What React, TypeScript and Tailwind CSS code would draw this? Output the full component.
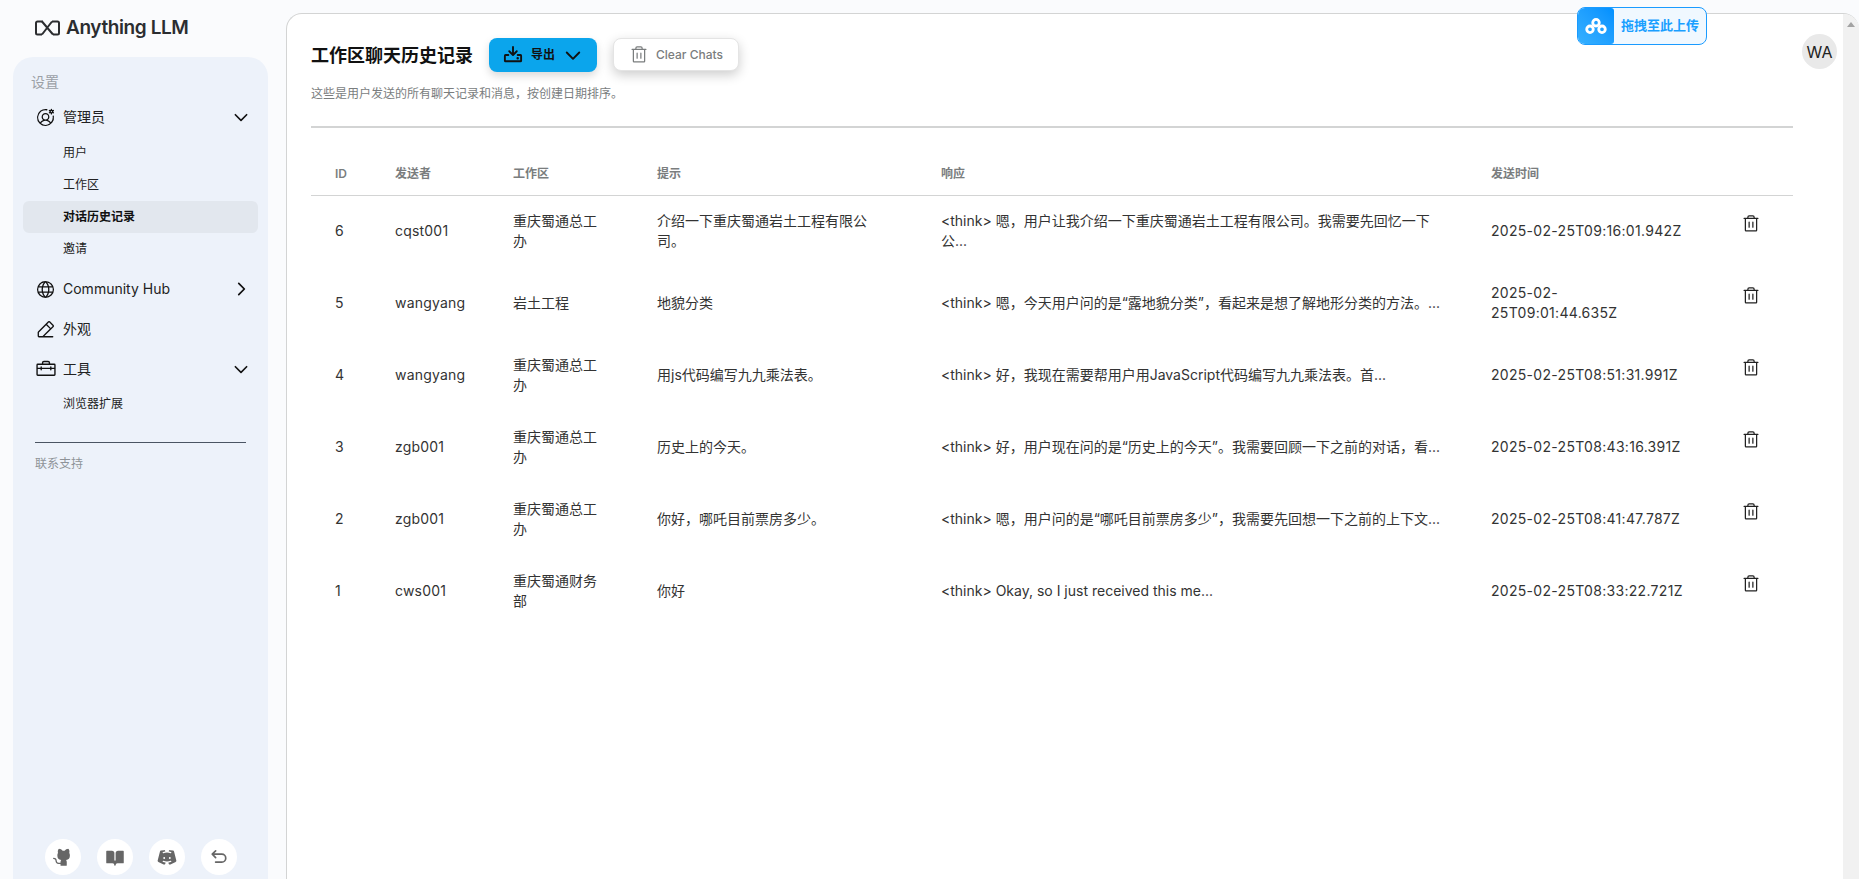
import {
  PiArrowUUpLeftBold,
  PiBookOpenFill,
  PiCaretDownBold,
  PiCaretRightBold,
  PiDiscordLogoFill,
  PiDownloadBold,
  PiGithubLogoFill,
  PiGlobe,
  PiPencilSimpleLine,
  PiToolbox,
  PiTrash,
  PiUserCircleGear,
} from "react-icons/pi";

const font = "font-['Inter','Noto_Sans_CJK_SC',sans-serif]";

const chats = [
  {
    id: 6,
    sender: "cqst001",
    workspace: "重庆蜀通总工办",
    prompt: "介绍一下重庆蜀通岩土工程有限公司。",
    response: "<think> 嗯，用户让我介绍一下重庆蜀通岩土工程有限公司。我需要先回忆一下公...",
    sent: ["2025-02-25T09:16:01.942Z"],
  },
  {
    id: 5,
    sender: "wangyang",
    workspace: "岩土工程",
    prompt: "地貌分类",
    response: "<think> 嗯，今天用户问的是“露地貌分类”，看起来是想了解地形分类的方法。...",
    sent: ["2025-02-", "25T09:01:44.635Z"],
  },
  {
    id: 4,
    sender: "wangyang",
    workspace: "重庆蜀通总工办",
    prompt: "用js代码编写九九乘法表。",
    response: "<think> 好，我现在需要帮用户用JavaScript代码编写九九乘法表。首...",
    sent: ["2025-02-25T08:51:31.991Z"],
  },
  {
    id: 3,
    sender: "zgb001",
    workspace: "重庆蜀通总工办",
    prompt: "历史上的今天。",
    response: "<think> 好，用户现在问的是“历史上的今天”。我需要回顾一下之前的对话，看...",
    sent: ["2025-02-25T08:43:16.391Z"],
  },
  {
    id: 2,
    sender: "zgb001",
    workspace: "重庆蜀通总工办",
    prompt: "你好，哪吒目前票房多少。",
    response: "<think> 嗯，用户问的是“哪吒目前票房多少”，我需要先回想一下之前的上下文...",
    sent: ["2025-02-25T08:41:47.787Z"],
  },
  {
    id: 1,
    sender: "cws001",
    workspace: "重庆蜀通财务部",
    prompt: "你好",
    response: "<think> Okay, so I just received this me...",
    sent: ["2025-02-25T08:33:22.721Z"],
  },
];

function SubItem({ label, active }: { label: string; active?: boolean }) {
  return (
    <div
      className={`flex h-8 items-center rounded-md pl-10 text-xs ${
        active ? "bg-[#e2e7ee] font-semibold text-[#111]" : "font-normal text-[#222]"
      }`}
    >
      {label}
    </div>
  );
}

function MenuItem({
  icon,
  label,
  caret,
}: {
  icon: React.ReactNode;
  label: string;
  caret?: "down" | "right";
}) {
  return (
    <div className="flex h-8 items-center pr-[8px] pl-[12px] text-sm font-normal text-[#222]">
      <span className="flex w-[28px] shrink-0 text-[#111]">{icon}</span>
      <span className="flex-1">{label}</span>
      {caret === "down" && <PiCaretDownBold size={18} className="text-[#111]" />}
      {caret === "right" && <PiCaretRightBold size={18} className="text-[#111]" />}
    </div>
  );
}

function Sidebar() {
  return (
    <aside className="ml-[13px] flex w-[255px] shrink-0 flex-col">
      <div className="flex h-[57px] items-center gap-[6px] pb-[2px] pl-[22px] text-[#2b2d30]">
        <svg width="25" height="16" viewBox="0 0 25 16" fill="none" stroke="currentColor" strokeWidth="2">
          <path d="M8 1.500H2.500A1.500 1.500 0 0 0 1 3V13A1.500 1.500 0 0 0 2.500 14.500H7" />
          <path d="M17 1.500H22.500A1.500 1.500 0 0 1 24 3V13A1.500 1.500 0 0 1 22.500 14.500H18" />
          <path d="M7 1.500L18 14.500M17 1.500L7 14.500" />
        </svg>
        <span className="text-[19px] leading-none font-semibold tracking-[-0.4px]">Anything LLM</span>
      </div>
      <div className="flex min-h-0 flex-1 flex-col rounded-t-[20px] bg-[#edf2fa] px-[10px] pt-[16px]">
        <p className="pl-2 text-sm leading-[18px] text-[#9ba0a6]">设置</p>
        <div className="mt-[10px]">
          <MenuItem icon={<PiUserCircleGear size={21} />} label="管理员" caret="down" />
          <div className="mt-[4px]">
            <SubItem label="用户" />
            <SubItem label="工作区" />
            <SubItem label="对话历史记录" active />
            <SubItem label="邀请" />
          </div>
          <div className="mt-[8px] flex flex-col gap-[8px]">
            <MenuItem icon={<PiGlobe size={21} />} label="Community Hub" caret="right" />
            <MenuItem icon={<PiPencilSimpleLine size={21} />} label="外观" />
            <MenuItem icon={<PiToolbox size={22} />} label="工具" caret="down" />
          </div>
          <div className="mt-[3px]">
            <SubItem label="浏览器扩展" />
          </div>
        </div>
        <div className="mx-3 mt-[22px] border-t border-[#4b5563]" />
        <p className="mt-[13px] pl-3 text-xs text-[#8e9398]">联系支持</p>
        <div className="mt-auto mb-1 flex justify-center gap-4">
          {[
            <PiGithubLogoFill key="gh" size={20} />,
            <PiBookOpenFill key="book" size={20} />,
            <PiDiscordLogoFill key="dc" size={20} />,
            <PiArrowUUpLeftBold key="back" size={18} />,
          ].map((icon) => (
            <div
              key={icon.key}
              className="flex size-9 items-center justify-center rounded-full bg-white text-[#666]"
            >
              {icon}
            </div>
          ))}
        </div>
      </div>
    </aside>
  );
}

function ChatTable() {
  return (
    <table className="mt-[25px] w-full table-fixed border-collapse text-left text-sm">
      <colgroup>
        <col className="w-[60px]" />
        <col className="w-[118px]" />
        <col className="w-[144px]" />
        <col className="w-[284px]" />
        <col className="w-[550px]" />
        <col className="w-[238px]" />
        <col />
      </colgroup>
      <thead>
        <tr className="h-[42px] border-b border-[#d3d4d4] text-xs font-semibold text-[#7a7d7e]">
          <th className="pl-[24px] font-semibold">ID</th>
          <th className="pl-[24px] font-semibold">发送者</th>
          <th className="pl-[24px] font-semibold">工作区</th>
          <th className="pl-[24px] font-semibold">提示</th>
          <th className="pl-[24px] font-semibold">响应</th>
          <th className="pl-[24px] font-semibold">发送时间</th>
          <th />
        </tr>
      </thead>
      <tbody className="text-[#333]">
        {chats.map((chat) => (
          <tr key={chat.id} className="h-[72px]">
            <td className="pl-[24px]">{chat.id}</td>
            <td className="pl-[24px] tracking-[0.2px]">{chat.sender}</td>
            <td className="px-[24px]">{chat.workspace}</td>
            <td className="px-[24px]">{chat.prompt}</td>
            <td className="px-[24px]">{chat.response}</td>
            <td className="pl-[24px] tracking-[0.3px] whitespace-nowrap">
              {chat.sent.map((part) => (
                <div key={part}>{part}</div>
              ))}
            </td>
            <td className="pl-[36px]">
              <PiTrash size={20} className="mb-[14px] text-[#222]" />
            </td>
          </tr>
        ))}
      </tbody>
    </table>
  );
}

export default function App() {
  return (
    <div className={`flex h-[879px] w-full overflow-hidden bg-[#fafbfd] ${font}`}>
      <Sidebar />
      <main className="relative mt-[13px] ml-[18px] flex min-w-0 flex-1 overflow-hidden rounded-t-[16px] border-t border-l border-[#d3d4d4] bg-white">
        <div className="min-w-0 flex-1 pt-[24px] pr-[50px] pl-[24px]">
          <div className="flex h-[36px] items-start">
            <h1 className="self-center text-lg font-bold text-[#111]">工作区聊天历史记录</h1>
            <button className="ml-[16px] flex h-[34px] w-[108px] items-center justify-center gap-2 rounded-lg bg-[#0ba5ec] text-xs font-semibold text-[#111] shadow-[0_4px_8px_rgba(0,0,0,0.15)]">
              <PiDownloadBold size={20} />
              导出
              <PiCaretDownBold size={20} />
            </button>
            <button className="ml-[16px] flex h-[33px] w-[126px] items-center justify-center gap-[7px] rounded-lg border border-[#e4e4e4] bg-white text-xs font-medium text-[#7a7d7e] shadow-[0_4px_12px_rgba(0,0,0,0.2)]">
              <PiTrash size={20} />
              Clear Chats
            </button>
          </div>
          <p className="mt-[10px] text-xs leading-[20px] text-[#7a7d7e]">
            这些是用户发送的所有聊天记录和消息，按创建日期排序。
          </p>
          <div className="mt-[22px] border-t-2 border-[#d3d4d4]" />
          <ChatTable />
        </div>
        <div className="flex w-[16px] shrink-0 justify-center bg-[#f1f1f1] pt-[8px]">
          <span className="h-0 w-0 border-x-[4px] border-b-[5px] border-x-transparent border-b-[#a3a3a3]" />
        </div>
        <div className="absolute top-[20px] right-[22px] flex size-[35px] items-center justify-center rounded-full bg-[#e9e9e9] text-base text-[#222]">
          WA
        </div>
      </main>
      <div className="absolute top-[7px] left-[1577px] flex h-[38px] w-[130px] overflow-hidden rounded-lg border border-[#1a9bff] bg-[#f0f8ff]">
        <div className="flex w-[36px] items-center justify-center rounded-r-[3px] bg-gradient-to-tr from-[#35b0ff] to-[#0090ff]">
          <svg width="24" height="18" viewBox="0 0 22 16" fill="none" stroke="white" strokeWidth="2.600">
            <circle cx="11" cy="5" r="3" />
            <circle cx="5.500" cy="11" r="3" />
            <circle cx="16.500" cy="11" r="3" />
          </svg>
        </div>
        <span className="flex flex-1 items-center justify-center text-[13px] font-bold text-[#1a9fff]">
          拖拽至此上传
        </span>
      </div>
    </div>
  );
}
